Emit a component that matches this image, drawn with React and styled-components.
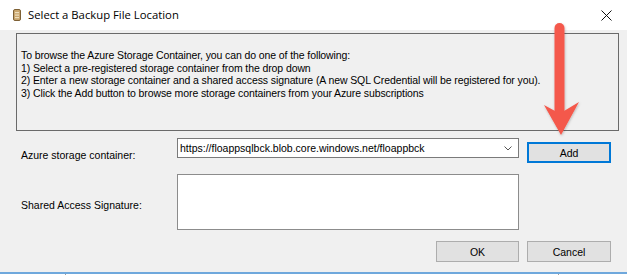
import React from "react";
import styled, { createGlobalStyle } from "styled-components";

const GlobalStyle = createGlobalStyle`
  html, body { margin: 0; padding: 0; background: #f0f0f0; overflow: hidden; }
  * { box-sizing: border-box; }
`;

const Window = styled.div`
  position: relative;
  width: 627px;
  height: 275px;
  display: flex;
  flex-direction: column;
  background: #f0f0f0;
  font-family: "Liberation Sans", Arial, sans-serif;
  font-size: 10.5px;
  color: #000;
`;

const TitleBar = styled.div`
  height: 30px;
  flex: none;
  background: #fff;
  display: flex;
  align-items: center;
  padding: 0 10px 0 13px;
`;

const Title = styled.span`
  font-family: "Open Sans", "Noto Sans", sans-serif;
  font-size: 11.3px;
  color: #000;
  margin-left: 7px;
  flex: 1;
  line-height: 14px;
`;

const CloseButton = styled.div`
  width: 12px;
  height: 12px;
  display: flex;
  align-items: center;
  justify-content: center;
  margin-right: 5px;
`;

const Body = styled.div`
  flex: 1;
  padding: 3px 8px 0 16px;
  display: flex;
  flex-direction: column;
`;

const GroupBox = styled.div`
  height: 98px;
  border: 1px solid #6a6a6a;
  padding: 15px 0 0 4px;
`;

const InfoText = styled.div`
  line-height: 12.5px;
  letter-spacing: -0.1px;
  white-space: pre-line;
`;

const Form = styled.div`
  margin: 7px 0 0 5px;
  display: grid;
  grid-template-columns: 148px 342px 84px;
  column-gap: 8px;
  row-gap: 11px;
`;

const Label = styled.div`
  padding-top: ${(p) => p.$top}px;
  line-height: 12px;
`;

const Combo = styled.div`
  height: 20px;
  background: #fff;
  border: 1px solid #7a7a7a;
  display: flex;
  align-items: center;
  padding: 0 6px 0 2px;
  line-height: 12px;
`;

const ComboValue = styled.span`
  flex: 1;
  white-space: nowrap;
  overflow: hidden;
`;

const TextArea = styled.div`
  height: 56px;
  background: #fff;
  border: 1px solid #8c8c8c;
`;

const Button = styled.div`
  height: 21px;
  width: ${(p) => p.$w || 84}px;
  margin-top: ${(p) => p.$mt || 0}px;
  justify-self: ${(p) => p.$justify || "start"};
  background: #e1e1e1;
  border: ${(p) => (p.$focused ? "2px solid #0078d7" : "1px solid #adadad")};
  display: flex;
  align-items: center;
  justify-content: center;
  line-height: 12px;
`;

const Footer = styled.div`
  height: 3px;
  flex: none;
  border-top: 2px solid #6fa8dc;
  background: #fff;
  display: flex;
`;

const FooterCell = styled.div`
  width: ${(p) => p.$w}px;
  border-right: 1px solid #a0a0a0;
`;

const ArrowOverlay = styled.svg`
  position: absolute;
  left: 540px;
  top: 15px;
  overflow: visible;
  pointer-events: none;
`;

const AppIcon = () => (
  <svg width="8" height="12" viewBox="0 0 8 12">
    <rect x="0.5" y="0.5" width="7" height="11" rx="1.5" fill="#c9a66f" stroke="#7d6035" />
    <rect x="2" y="3" width="4" height="1.2" fill="#efe0bf" />
    <rect x="2" y="5.5" width="4" height="1.2" fill="#efe0bf" />
    <rect x="2" y="8" width="4" height="1.2" fill="#efe0bf" />
  </svg>
);

const CloseIcon = () => (
  <svg width="11" height="11" viewBox="0 0 11 11">
    <path d="M0.5 0.5 L10.5 10.5 M10.5 0.5 L0.5 10.5" stroke="#111" strokeWidth="1" fill="none" />
  </svg>
);

const Chevron = () => (
  <svg width="8" height="5" viewBox="0 0 8 5">
    <path d="M0.5 0.5 L4 4 L7.5 0.5" stroke="#555" strokeWidth="1" fill="none" />
  </svg>
);

const Arrow = () => (
  <ArrowOverlay width="45" height="125" viewBox="0 0 45 125">
    <defs>
      <filter id="sh" x="-30%" y="-10%" width="160%" height="130%">
        <feDropShadow dx="0.5" dy="1" stdDeviation="1" floodColor="#000" floodOpacity="0.25" />
      </filter>
    </defs>
    <g filter="url(#sh)" fill="#f4584b">
      <line x1="19.5" y1="13" x2="19.5" y2="100" stroke="#f4584b" strokeWidth="10" strokeLinecap="round" />
      <polygon points="4,90 15,96 24,96 39,87 21,120" />
    </g>
  </ArrowOverlay>
);

export default function App() {
  return (
    <>
      <GlobalStyle />
      <Window>
        <TitleBar>
          <AppIcon />
          <Title>Select a Backup File Location</Title>
          <CloseButton>
            <CloseIcon />
          </CloseButton>
        </TitleBar>
        <Body>
          <GroupBox>
            <InfoText>
              {"To browse the Azure Storage Container, you can do one of the following:\n1) Select a pre-registered storage container from the drop down\n2) Enter a new storage container and a shared access signature (A new SQL Credential will be registered for you).\n3) Click the Add button to browse more storage containers from your Azure subscriptions"}
            </InfoText>
          </GroupBox>
          <Form>
            <Label $top={11}>Azure storage container:</Label>
            <Combo>
              <ComboValue>https://floappsqlbck.blob.core.windows.net/floappbck</ComboValue>
              <Chevron />
            </Combo>
            <Button $focused $mt={4}>Add</Button>
            <Label $top={25}>Shared Access Signature:</Label>
            <TextArea />
            <div />
            <div />
            <Button $w={83} $justify="end">OK</Button>
            <Button>Cancel</Button>
          </Form>
        </Body>
        <Footer>
          <FooterCell $w={66} />
          <FooterCell $w={493} />
        </Footer>
        <Arrow />
      </Window>
    </>
  );
}
